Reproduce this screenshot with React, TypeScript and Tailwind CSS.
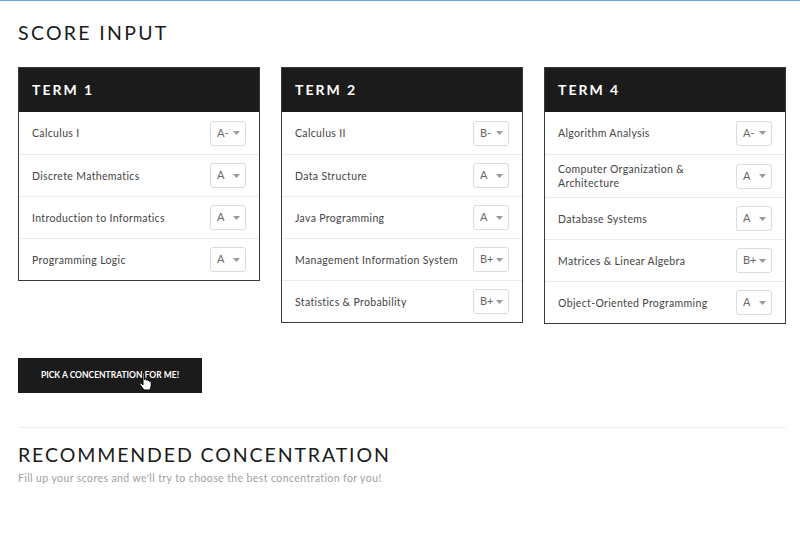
import React from "react";

type Course = { name: string; grade: string };

const terms: { title: string; courses: Course[] }[] = [
  {
    title: "TERM 1",
    courses: [
      { name: "Calculus I", grade: "A-" },
      { name: "Discrete Mathematics", grade: "A" },
      { name: "Introduction to Informatics", grade: "A" },
      { name: "Programming Logic", grade: "A" },
    ],
  },
  {
    title: "TERM 2",
    courses: [
      { name: "Calculus II", grade: "B-" },
      { name: "Data Structure", grade: "A" },
      { name: "Java Programming", grade: "A" },
      { name: "Management Information System", grade: "B+" },
      { name: "Statistics & Probability", grade: "B+" },
    ],
  },
  {
    title: "TERM 4",
    courses: [
      { name: "Algorithm Analysis", grade: "A-" },
      { name: "Computer Organization & Architecture", grade: "A" },
      { name: "Database Systems", grade: "A" },
      { name: "Matrices & Linear Algebra", grade: "B+" },
      { name: "Object-Oriented Programming", grade: "A" },
    ],
  },
];

const GradeSelect = ({ grade }: { grade: string }) => (
  <div className="flex h-[25px] w-[36px] shrink-0 items-center justify-between rounded-[3px] border border-[#dcdcdc] bg-white pl-[6px] pr-[5px] text-[11px] text-[#666]">
    <span>{grade}</span>
    <svg width="7" height="4" viewBox="0 0 7 4">
      <path d="M0 0 L7 0 L3.5 4 Z" fill="#9a9a9a" />
    </svg>
  </div>
);

const TermCard = ({ title, courses }: { title: string; courses: Course[] }) => (
  <div className="w-[242px] shrink-0 border border-[#3a3a3a] bg-white">
    <div className="flex h-[44px] items-center bg-[#1b1b1b] px-[13px] pb-[2px] text-[14px] font-bold tracking-[2px] text-white">
      {title}
    </div>
    {courses.map((c, i) => (
      <div
        key={c.name}
        className={
          "flex min-h-[42px] items-center justify-between gap-3 py-[7px] pl-[13px] pr-[13px] " +
          (i > 0 ? "border-t border-[#ebebeb]" : "")
        }
      >
        <span className="text-[10.5px] leading-[14px] tracking-[0.35px] text-[#444]">{c.name}</span>
        <GradeSelect grade={c.grade} />
      </div>
    ))}
  </div>
);

export default function App() {
  return (
    <div className="min-h-[533px] border-t border-[#6fa3e8] bg-white px-[18px] pt-[18px] font-['Lato','Noto_Sans',sans-serif] text-[#222]">
      <h1 className="text-[19.5px] leading-[28px] tracking-[2.3px] text-[#1a1a1a]">SCORE INPUT</h1>

      <div className="mt-[20px] flex items-start gap-[21px]">
        {terms.map((t) => (
          <TermCard key={t.title} title={t.title} courses={t.courses} />
        ))}
      </div>

      <div className="relative mt-[34px] w-[184px]">
        <button className="flex h-[35px] w-[184px] items-center justify-center bg-[#1b1b1b] text-[8.5px] font-bold text-white">
          PICK A CONCENTRATION FOR ME!
        </button>
        <svg
          className="absolute left-[121px] top-[14px]"
          width="14"
          height="19"
          viewBox="0 0 14 19"
        >
          <path
            d="M4 1.5 C4 0.7 5.6 0.7 5.6 1.5 L5.6 8 L5.8 6.8 C5.8 6 7.4 6 7.4 6.8 L7.4 8.2 C7.4 7.4 9 7.4 9 8.2 L9 9 C9 8.2 10.6 8.2 10.6 9 L10.6 9.6 C10.6 8.8 12.2 8.8 12.2 9.6 L12.2 13.5 C12.2 15.5 11 17.5 10.5 18 L5 18 C4 16.5 2.5 14.5 1 12.5 C0.4 11.6 1.6 10.6 2.4 11.4 L4 13 Z"
            fill="#fff"
            stroke="#000"
            strokeWidth="1"
          />
        </svg>
      </div>

      <div className="mt-[34px] h-px w-[768px] bg-[#ececec]" />

      <h2 className="mt-[13px] text-[19.5px] leading-[28px] tracking-[1.9px] text-[#1a1a1a]">
        RECOMMENDED CONCENTRATION
      </h2>
      <p className="mt-[2px] text-[10.5px] tracking-[0.4px] text-[#a0a0a0]">
        Fill up your scores and we'll try to choose the best concentration for you!
      </p>
    </div>
  );
}
